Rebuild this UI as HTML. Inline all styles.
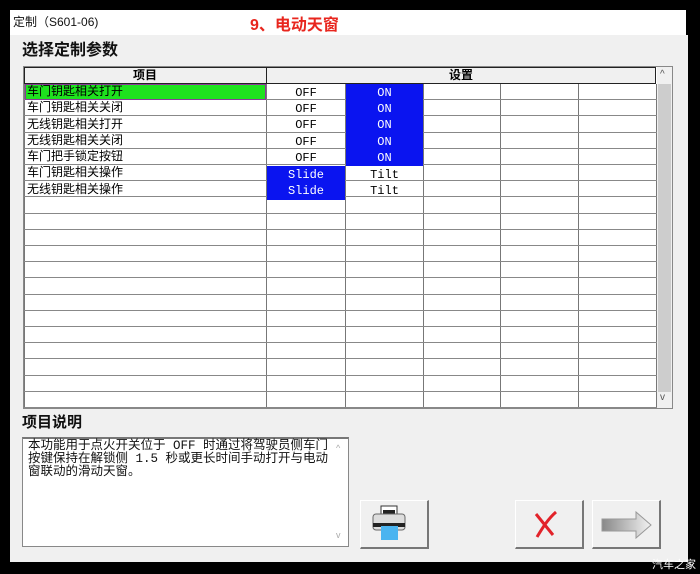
<!DOCTYPE html>
<html><head><meta charset="utf-8"><style>
*{margin:0;padding:0;box-sizing:border-box}
body{width:700px;height:574px;background:#000;position:relative;overflow:hidden;font-family:"Liberation Sans","Noto Sans CJK SC",sans-serif}
.a{position:absolute}
.cell{position:absolute;font-family:"Liberation Mono","Noto Sans CJK SC",monospace;font-size:12px;line-height:15px;white-space:nowrap}
.btn{position:absolute;background:#f0f0f0;border:1px solid #fff;border-right:2px solid #777;border-bottom:2px solid #777;top:500px;width:69px;height:49px}
</style></head><body>
<div class="a" style="left:10px;top:10px;width:676px;height:25px;background:#fff"></div>
<div class="a" style="left:13px;top:13px;font-size:12px;color:#111">定制（S601-06)</div>
<div class="a" style="left:250px;top:11px;font-size:16px;font-weight:bold;color:#e8261e">9、电动天窗</div>
<div class="a" style="left:10px;top:35px;width:678px;height:527px;background:#f0f0f0"></div>
<div class="a" style="left:22px;top:36px;font-size:16px;font-weight:bold;color:#111">选择定制参数</div>
<div class="a" style="left:23px;top:66px;width:650px;height:343px;background:#fff;border:1px solid #888"></div>
<div class="a" style="left:24px;top:67px;width:632px;height:17px;background:#f0f0f0;border:1px solid #222"></div>
<div class="a" style="left:266px;top:67px;width:1px;height:17px;background:#222"></div>
<div class="a" style="left:24px;top:68px;width:242px;text-align:center;font-size:12px;font-weight:bold;line-height:15px">项目</div>
<div class="a" style="left:266px;top:68px;width:390px;text-align:center;font-size:12px;font-weight:bold;line-height:15px">设置</div>
<div class="a" style="left:657px;top:67px;width:15px;height:341px;background:#f0f0f0"></div>
<div class="a" style="left:658px;top:84px;width:13px;height:308px;background:#cdcdcd"></div>
<div class="a" style="left:660px;top:69px;font-size:10px;color:#555">^</div>
<div class="a" style="left:660px;top:392px;font-size:10px;color:#555">v</div>
<svg class="a" style="left:0;top:0" width="700" height="574">
<g stroke="#777" stroke-width="1">
<line x1="266.5" y1="84" x2="266.5" y2="408"/><line x1="345.5" y1="84" x2="345.5" y2="408"/><line x1="423.5" y1="84" x2="423.5" y2="408"/><line x1="500.5" y1="84" x2="500.5" y2="408"/><line x1="578.5" y1="84" x2="578.5" y2="408"/><line x1="656.5" y1="84" x2="656.5" y2="408"/>
<line x1="24.5" y1="84" x2="24.5" y2="408"/>
</g>
<g stroke="#888" stroke-width="1" id="rl"></g>
</svg>
<div class="a" style="left:25px;top:84px;width:241px;height:16px;background:#1ee21e;border:1px solid #8a3a9a"></div>
<div class="a" style="left:346px;top:84px;width:77px;height:82px;background:#0a14f0"></div>
<div class="a" style="left:267px;top:166px;width:78px;height:34px;background:#0a14f0"></div>
<div class="cell" style="left:27px;top:85px">车门钥匙相关打开</div>
<div class="cell" style="left:27px;top:101px">车门钥匙相关关闭</div>
<div class="cell" style="left:27px;top:118px">无线钥匙相关打开</div>
<div class="cell" style="left:27px;top:134px">无线钥匙相关关闭</div>
<div class="cell" style="left:27px;top:150px">车门把手锁定按钮</div>
<div class="cell" style="left:27px;top:166px">车门钥匙相关操作</div>
<div class="cell" style="left:27px;top:183px">无线钥匙相关操作</div>
<div class="cell" style="left:267px;width:78px;text-align:center;top:86px">OFF</div>
<div class="cell" style="left:267px;width:78px;text-align:center;top:102px">OFF</div>
<div class="cell" style="left:267px;width:78px;text-align:center;top:118px">OFF</div>
<div class="cell" style="left:267px;width:78px;text-align:center;top:135px">OFF</div>
<div class="cell" style="left:267px;width:78px;text-align:center;top:151px">OFF</div>
<div class="cell" style="left:346px;width:77px;text-align:center;top:86px;color:#fff">ON</div>
<div class="cell" style="left:346px;width:77px;text-align:center;top:102px;color:#fff">ON</div>
<div class="cell" style="left:346px;width:77px;text-align:center;top:118px;color:#fff">ON</div>
<div class="cell" style="left:346px;width:77px;text-align:center;top:135px;color:#fff">ON</div>
<div class="cell" style="left:346px;width:77px;text-align:center;top:151px;color:#fff">ON</div>
<div class="cell" style="left:267px;width:78px;text-align:center;top:168px;color:#fff">Slide</div>
<div class="cell" style="left:267px;width:78px;text-align:center;top:184px;color:#fff">Slide</div>
<div class="cell" style="left:346px;width:77px;text-align:center;top:168px">Tilt</div>
<div class="cell" style="left:346px;width:77px;text-align:center;top:184px">Tilt</div>
<div class="a" style="left:22px;top:411px;font-size:15px;font-weight:bold;color:#111">项目说明</div>
<div class="a" style="left:22px;top:437px;width:327px;height:110px;background:#fff;border:1px solid #888;border-top:2px solid #777"></div>
<div class="a" style="left:28px;top:440px;width:310px;font-family:'Liberation Mono','Noto Sans CJK SC',monospace;font-size:12.5px;line-height:13px;color:#111;white-space:nowrap">本功能用于点火开关位于 OFF 时通过将驾驶员侧车门<br>按键保持在解锁侧 1.5 秒或更长时间手动打开与电动<br>窗联动的滑动天窗。</div>
<div class="a" style="left:336px;top:443px;font-size:9px;color:#aaa">^</div>
<div class="a" style="left:336px;top:530px;font-size:9px;color:#aaa">v</div>
<div class="btn" style="left:360px"><svg width="66" height="46"><rect x="20" y="5" width="16" height="8" fill="#fff" stroke="#333"/><rect x="22" y="9" width="12" height="4" fill="#222"/><rect x="12" y="13" width="32" height="16" rx="3" fill="#ddd" stroke="#666"/><rect x="12" y="22" width="32" height="4" fill="#222"/><rect x="20" y="25" width="17" height="14" fill="#4ab4f0"/></svg></div>
<div class="btn" style="left:515px"><svg width="66" height="46"><path d="M20 13 L37 34 M40 11 C32 18 27 26 21 36" stroke="#e2232a" stroke-width="3" fill="none"/></svg></div>
<div class="btn" style="left:592px"><svg width="66" height="46"><defs><linearGradient id="g"><stop offset="0" stop-color="#888"/><stop offset="1" stop-color="#f2f2f2"/></linearGradient></defs><path d="M9 18 H43 V11 L58 24 L43 37 V30 H9 Z" fill="url(#g)" stroke="#999"/></svg></div>
<div class="a" style="left:652px;top:556px;font-size:11px;color:#fff">汽车之家</div>
<script>
var g=document.getElementById('rl');
for(var i=1;i<=20;i++){var y=Math.round(84+i*16.2)-0.5;var l=document.createElementNS('http://www.w3.org/2000/svg','line');l.setAttribute('x1',24);l.setAttribute('x2',657);l.setAttribute('y1',y);l.setAttribute('y2',y);g.appendChild(l);}
</script>
</body></html>
